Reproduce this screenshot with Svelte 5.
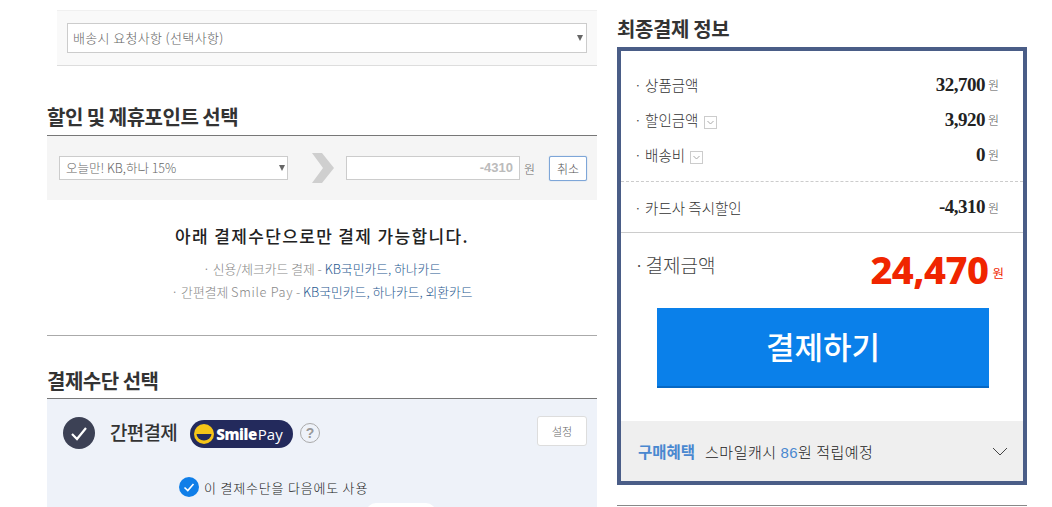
<script>
  const rows = [
    { label: '상품금액', value: '32,700', toggle: false },
    { label: '할인금액', value: '3,920', toggle: true },
    { label: '배송비', value: '0', toggle: true },
  ]
</script>

<div class="page">
  <div class="left">
    <div class="request">
      <div class="select wide">
        <span>배송시 요청사항 (선택사항)</span>
        <i class="caret"></i>
      </div>
    </div>

    <h2 class="title discount-title">할인 및 제휴포인트 선택</h2>
    <div class="discount">
      <div class="select coupon">
        <span>오늘만! KB,하나 15%</span>
        <i class="caret"></i>
      </div>
      <svg class="arrow" width="24" height="30" viewBox="0 0 24 30">
        <path d="M1 0 L11 0 L23 15 L11 30 L1 30 L12 15 Z" fill="#cfcfcf" />
      </svg>
      <div class="amount">-4310</div>
      <span class="won-label">원</span>
      <button class="cancel">취소</button>
    </div>

    <div class="notice">
      <p class="notice-head">아래 결제수단으로만 결제 가능합니다.</p>
      <p class="notice-line">· 신용/체크카드 결제 - <em>KB국민카드, 하나카드</em></p>
      <p class="notice-line">· 간편결제 <span class="smile-word">Smile Pay</span> - <em>KB국민카드, 하나카드, 외환카드</em></p>
    </div>

    <h2 class="title method-title">결제수단 선택</h2>
    <div class="method">
      <div class="method-row">
        <span class="check-big">
          <svg width="32" height="32" viewBox="0 0 32 32">
            <circle cx="16" cy="16" r="16" fill="#3c4155" />
            <path d="M9 17 L14 22 L23 11" fill="none" stroke="#fff" stroke-width="2.2" />
          </svg>
        </span>
        <strong class="method-name">간편결제</strong>
        <span class="smile">
          <svg width="20" height="20" viewBox="0 0 20 20">
            <circle cx="10" cy="10" r="10" fill="#f5c518" />
            <path d="M2.5 10 H17.5 A7.5 6.5 0 0 1 2.5 10 Z" fill="#232a5c" />
          </svg>
          <b>Smile</b><span class="pay">Pay</span>
        </span>
        <span class="help">?</span>
        <button class="setting">설정</button>
      </div>
      <div class="reuse">
        <svg width="20" height="20" viewBox="0 0 20 20">
          <circle cx="10" cy="10" r="10" fill="#0f7ee8" />
          <path d="M5.5 10.5 L8.8 13.5 L14.5 7" fill="none" stroke="#fff" stroke-width="1.6" />
        </svg>
        <span>이 결제수단을 다음에도 사용</span>
      </div>
      <div class="peek"></div>
    </div>
  </div>

  <div class="right">
    <h2 class="summary-title">최종결제 정보</h2>
    <div class="summary">
      <div class="rows">
        {#each rows as row}
          <div class="row">
            <span class="label">· {row.label}
              {#if row.toggle}
                <svg class="toggle" width="13" height="13" viewBox="0 0 13 13">
                  <rect x="0.5" y="0.5" width="12" height="12" fill="#fff" stroke="#ccc" />
                  <path d="M3.5 5 L6.5 8 L9.5 5" fill="none" stroke="#aaa" />
                </svg>
              {/if}
            </span>
            <span class="value"><b>{row.value}</b><small>원</small></span>
          </div>
        {/each}
      </div>
      <div class="instant row">
        <span class="label">· 카드사 즉시할인</span>
        <span class="value"><b>-4,310</b><small>원</small></span>
      </div>
      <div class="total">
        <span class="total-label">· 결제금액</span>
        <span class="total-value"><b>24,470</b><small>원</small></span>
      </div>
      <button class="pay-btn">결제하기</button>
      <div class="benefit">
        <span class="benefit-name">구매혜택</span>
        <span class="benefit-text">스마일캐시 <em>86</em>원 적립예정</span>
        <svg class="chevron" width="16" height="9" viewBox="0 0 16 9">
          <path d="M1 1 L8 8 L15 1" fill="none" stroke="#444" />
        </svg>
      </div>
    </div>
    <div class="summary-end"></div>
  </div>
</div>

<style>
  :global(body) {
    margin: 0;
    background: #fff;
  }

  .page {
    display: flex;
    gap: 20px;
    width: 1052px;
    height: 507px;
    padding-left: 47px;
    box-sizing: border-box;
    overflow: hidden;
    font-family: 'Noto Sans CJK KR', 'Noto Sans', sans-serif;
    color: #333;
  }

  .left {
    width: 550px;
    flex: none;
    padding-top: 10px;
  }

  .right {
    width: 410px;
    flex: none;
  }

  .request {
    margin-left: 10px;
    height: 56px;
    box-sizing: border-box;
    padding: 12px 10px 0;
    background: #f9f9f9;
    border-top: 1px solid #f0f0f0;
    border-bottom: 1px solid #ddd;
  }

  .select {
    display: flex;
    align-items: center;
    justify-content: space-between;
    box-sizing: border-box;
    background: #fff;
    border: 1px solid #ccc;
    padding: 0 3px 2px 5px;
    font-size: 13px;
    font-weight: 300;
    letter-spacing: 0.35px;
    color: #666;
  }

  .wide {
    height: 30px;
  }

  .caret {
    width: 0;
    height: 0;
    margin-top: 2px;
    border-left: 3px solid transparent;
    border-right: 3px solid transparent;
    border-top: 6px solid #666;
  }

  .title {
    margin: 0;
    font-size: 20px;
    line-height: 28px;
    font-weight: 700;
    color: #333;
    border-bottom: 1px solid #777;
    letter-spacing: -0.5px;
  }

  .discount-title {
    margin-top: 37px;
    padding-bottom: 4px;
  }

  .discount {
    display: flex;
    align-items: center;
    height: 64px;
    padding-left: 12px;
    background: #f5f5f5;
  }

  .coupon {
    width: 229px;
    height: 24px;
    padding: 0 2px 2px 6px;
    font-size: 12.5px;
    letter-spacing: 0;
  }

  .arrow {
    margin-left: 23px;
  }

  .amount {
    width: 174px;
    height: 24px;
    margin-left: 11px;
    padding-right: 6px;
    box-sizing: border-box;
    background: #fff;
    border: 1px solid #ccc;
    font: 700 13px/22px 'Liberation Sans', sans-serif;
    color: #bbb;
    text-align: right;
  }

  .won-label {
    margin-left: 4px;
    width: 12px;
    font-size: 12px;
    font-weight: 300;
    color: #666;
  }

  .cancel {
    width: 38px;
    height: 25px;
    margin-left: 13px;
    padding: 0;
    background: #fff;
    border: 1px solid #7ea6d8;
    border-radius: 2px;
    box-shadow: 0 0 1px #7ea6d8;
    font-family: inherit;
    font-size: 12px;
    font-weight: 300;
    color: #555;
  }

  .notice {
    height: 136px;
    box-sizing: border-box;
    padding-top: 24px;
    text-align: center;
    border-bottom: 1px solid #aaa;
  }

  .notice p {
    margin: 0;
  }

  .notice-head {
    font-size: 17px;
    line-height: 24px;
    font-weight: 500;
    letter-spacing: 1.35px;
    color: #222;
  }

  .notice-line {
    font-size: 12.8px;
    line-height: 23px;
    font-weight: 300;
    color: #888;
  }

  .notice-head + .notice-line {
    margin-top: 9px;
  }

  .notice-line em {
    font-style: normal;
    color: #28598f;
  }

  .smile-word {
    letter-spacing: 0.7px;
  }

  .method-title {
    margin-top: 31px;
    padding-bottom: 3px;
  }

  .method {
    position: relative;
    height: 108px;
    background: #eef2f9;
  }

  .method-row {
    display: flex;
    align-items: center;
    height: 68px;
    padding-left: 16px;
  }

  .check-big {
    display: flex;
    height: 32px;
  }

  .method-name {
    margin-left: 15px;
    margin-bottom: 3px;
    font-size: 19px;
    font-weight: 500;
    letter-spacing: -0.7px;
    color: #333;
  }

  .smile {
    display: flex;
    align-items: center;
    box-sizing: border-box;
    width: 103px;
    height: 28px;
    margin-left: 13px;
    margin-top: 2px;
    padding-left: 4px;
    border-radius: 14px;
    background: #232a5c;
    color: #fff;
    font-family: 'Open Sans', sans-serif;
    font-size: 15px;
  }

  .smile b {
    margin-left: 2px;
    font-weight: 800;
    letter-spacing: -0.4px;
  }

  .pay {
    margin-left: 1px;
    font-weight: 400;
  }

  .help {
    display: flex;
    align-items: center;
    justify-content: center;
    box-sizing: border-box;
    width: 20px;
    height: 20px;
    margin-left: 7px;
    border: 1px solid #aaa;
    border-radius: 50%;
    color: #999;
    font: 700 14px 'Liberation Sans', sans-serif;
  }

  .setting {
    width: 50px;
    height: 30px;
    margin-left: auto;
    margin-right: 10px;
    margin-bottom: 4px;
    padding: 0;
    background: #fff;
    border: 1px solid #ddd;
    border-radius: 3px;
    font-family: inherit;
    font-size: 11px;
    font-weight: 300;
    color: #666;
  }

  .reuse {
    display: flex;
    align-items: center;
    gap: 5px;
    margin-top: 10px;
    margin-left: 132px;
    font-size: 13px;
    font-weight: 300;
    letter-spacing: 0.8px;
    color: #222;
  }

  .peek {
    position: absolute;
    left: 319px;
    top: 104px;
    width: 70px;
    height: 20px;
    background: #fff;
    border-radius: 10px;
  }

  .summary-title {
    margin: 0;
    height: 47px;
    padding-top: 15px;
    box-sizing: border-box;
    font-size: 20px;
    line-height: 28px;
    font-weight: 700;
    letter-spacing: -0.4px;
    color: #333;
  }

  .summary {
    height: 438px;
    box-sizing: border-box;
    border: 4px solid #4a5d87;
    background: #fff;
  }

  .rows {
    padding: 16px 0 9px;
    border-bottom: 1px dashed #ccc;
  }

  .row {
    display: flex;
    justify-content: space-between;
    align-items: center;
    height: 35px;
    padding: 0 24px 0 13px;
  }

  .label {
    display: flex;
    align-items: center;
    gap: 3px;
    font-size: 14.5px;
    font-weight: 300;
    color: #333;
    white-space: pre;
  }

  .toggle {
    margin-left: -1px;
    margin-top: 5px;
  }

  .value {
    display: flex;
    align-items: center;
  }

  .value b {
    font: 700 19px 'Liberation Serif', serif;
    color: #222;
    letter-spacing: -0.5px;
  }

  .value small {
    margin-left: 3px;
    font-size: 12px;
    font-weight: 300;
    color: #555;
  }

  .instant {
    height: 50px;
    border-bottom: 1px solid #ccc;
  }

  .total {
    display: flex;
    justify-content: space-between;
    height: 75px;
    padding: 12px 19px 0 13px;
    box-sizing: border-box;
  }

  .total-label {
    font-size: 19px;
    line-height: 40px;
    height: 32px;
    font-weight: 300;
    word-spacing: -3px;
    color: #444;
    white-space: pre;
  }

  .total-value {
    display: flex;
    align-items: center;
    color: #f02500;
    height: 44px;
  }

  .total-value b {
    margin-top: 3px;
    font: 800 38px/44px 'Noto Sans', sans-serif;
    letter-spacing: -0.5px;
  }

  .total-value small {
    margin-left: 4px;
    margin-top: 10px;
    font-size: 12.5px;
  }

  .pay-btn {
    display: block;
    width: 332px;
    height: 80px;
    margin: 0 0 0 36px;
    padding: 0 0 4px;
    background: #0a80ea;
    border: 0;
    border-bottom: 2px solid #0668c4;
    color: #fff;
    font-family: inherit;
    font-size: 31px;
    font-weight: 500;
  }

  .benefit {
    display: flex;
    align-items: center;
    height: 60px;
    margin-top: 33px;
    padding: 0 16px 0 17px;
    background: #efefef;
  }

  .benefit-name {
    font-size: 15.5px;
    font-weight: 700;
    color: #4a88d0;
  }

  .benefit-text {
    margin-left: 10px;
    color: #222;
    font-size: 15px;
    font-weight: 300;
    letter-spacing: 0.5px;
  }

  .benefit-text em {
    font-family: 'Liberation Sans', sans-serif;
    font-style: normal;
    color: #4a88d0;
  }

  .chevron {
    margin-left: auto;
    margin-right: -1px;
  }

  .summary-end {
    margin-top: 20px;
    border-top: 1px solid #888;
  }
</style>
